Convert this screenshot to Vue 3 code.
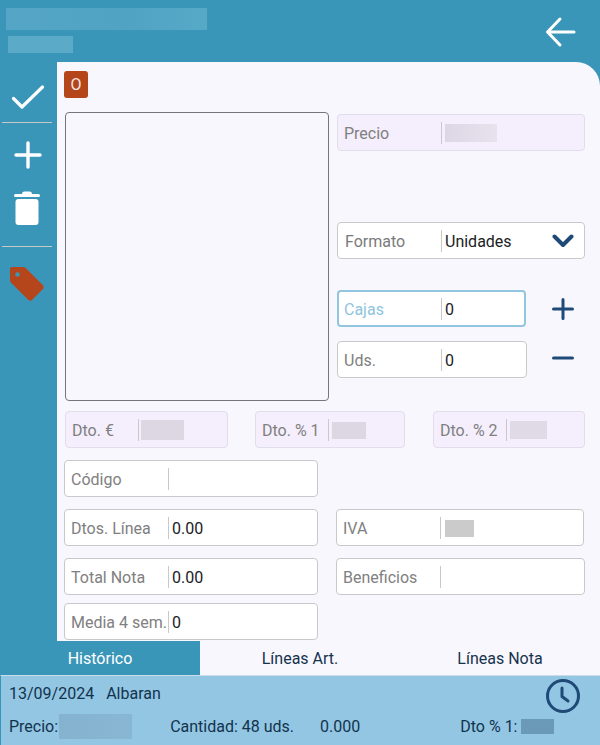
<template>
  <div class="page">
    <header class="topbar">
      <div class="titles">
        <div class="blur blur--title"></div>
        <div class="blur blur--sub"></div>
      </div>
      <svg class="back" width="32" height="32" viewBox="0 0 32 32" fill="none" stroke="#fff" stroke-width="3" stroke-linecap="round" stroke-linejoin="round">
        <path d="M29 16H3M15 3 2.500 16 15 29"/>
      </svg>
    </header>

    <div class="middle">
      <aside class="sidebar">
        <svg class="ico ico--check" width="34" height="26" viewBox="0 0 34 26" fill="none" stroke="#fff" stroke-width="3.200" stroke-linecap="round" stroke-linejoin="round">
          <path d="M2.500 14.500 11 23 31.500 3"/>
        </svg>
        <div class="side-line side-line--1"></div>
        <svg class="ico ico--plus" width="28" height="28" viewBox="0 0 28 28" fill="none" stroke="#fff" stroke-width="3.400" stroke-linecap="round">
          <path d="M14 2v24M2 14h24"/>
        </svg>
        <svg class="ico ico--trash" width="28" height="35" viewBox="0 0 28 35" fill="#fff">
          <rect x="1" y="3" width="26" height="3" rx="1.500"/>
          <path d="M9 3c0-1.500 1-2.500 2.500-2.500h5C18 .5 19 1.500 19 3z"/>
          <rect x="2.500" y="8" width="23" height="26" rx="3"/>
        </svg>
        <div class="side-line side-line--2"></div>
        <svg class="ico ico--tag" width="36" height="36" viewBox="0 0 36 36">
          <path fill="#b5461b" d="M3 1h11c1 0 2 .4 2.700 1.100l17 17c1.200 1.200 1.200 3 0 4.200L23.300 33.800c-1.200 1.200-3 1.200-4.200 0l-17-17C1.400 16 1 15 1 14V3c0-1.100.9-2 2-2z"/>
          <circle cx="8.500" cy="8.500" r="2.300" fill="#3a96b9"/>
        </svg>
      </aside>

      <main class="panel">
        <div class="badge">O</div>

        <div class="top-row">
          <div class="photo"></div>
          <div class="right-col">
            <div class="field field--off field--precio">
              <span class="label">Precio</span>
              <span class="value"><span class="blur blur--precio"></span></span>
            </div>
            <div class="field field--formato">
              <span class="label label--dark">Formato</span>
              <span class="value">Unidades</span>
              <svg class="chevron" width="22" height="14" viewBox="0 0 22 14" fill="none" stroke="#1f4a78" stroke-width="4" stroke-linecap="round" stroke-linejoin="round">
                <path d="M2.500 2.500 11 11l8.500-8.500"/>
              </svg>
            </div>
            <div class="qty-row qty-row--cajas">
              <div class="field field--focus field--qty">
                <span class="label">Cajas</span>
                <span class="value">0</span>
              </div>
              <svg width="24" height="24" viewBox="0 0 24 24" fill="none" stroke="#1f4a78" stroke-width="3" stroke-linecap="round">
                <path d="M12 2.500v19M2.500 12h19"/>
              </svg>
            </div>
            <div class="qty-row qty-row--uds">
              <div class="field field--qty field--uds">
                <span class="label">Uds.</span>
                <span class="value">0</span>
              </div>
              <svg width="24" height="24" viewBox="0 0 24 24" fill="none" stroke="#1f4a78" stroke-width="3" stroke-linecap="round">
                <path d="M2.500 10h19"/>
              </svg>
            </div>
          </div>
        </div>

        <div class="dto-row">
          <div class="field field--off field--dto dto-1">
            <span class="label">Dto. €</span>
            <span class="value"><span class="blur blur--d1"></span></span>
          </div>
          <div class="field field--off field--dto dto-2">
            <span class="label">Dto. % 1</span>
            <span class="value"><span class="blur blur--d2"></span></span>
          </div>
          <div class="field field--off field--dto dto-3">
            <span class="label">Dto. % 2</span>
            <span class="value"><span class="blur blur--d3"></span></span>
          </div>
        </div>

        <div class="form-grid">
          <div class="field"><span class="label">Código</span><span class="value"></span></div>
          <div></div>
          <div class="field"><span class="label">Dtos. Línea</span><span class="value">0.00</span></div>
          <div class="field"><span class="label">IVA</span><span class="value"><span class="blur blur--iva"></span></span></div>
          <div class="field"><span class="label">Total Nota</span><span class="value">0.00</span></div>
          <div class="field field--ben"><span class="label">Beneficios</span><span class="value"></span></div>
          <div class="field field--media"><span class="label">Media 4 sem.</span><span class="value">0</span></div>
        </div>
      </main>
    </div>

    <nav class="tabs">
      <div class="tab tab--active">Histórico</div>
      <div class="tab">Líneas Art.</div>
      <div class="tab">Líneas Nota</div>
    </nav>

    <section class="history">
      <div class="hist-line hist-line--1">
        <span>13/09/2024</span>
        <span class="albaran">Albaran</span>
        <svg class="clock" width="36" height="36" viewBox="0 0 36 36" fill="none" stroke="#1f4a78" stroke-width="3" stroke-linecap="round" stroke-linejoin="round">
          <circle cx="18" cy="18" r="15.500"/>
          <path d="M17 10v8.500l6 4.500"/>
        </svg>
      </div>
      <div class="hist-line hist-line--2">
        <span>Precio:</span>
        <span class="blur blur--hp"></span>
        <span class="cantidad">Cantidad: 48 uds.</span>
        <span class="zero">0.000</span>
        <span class="dto">Dto % 1:</span>
        <span class="blur blur--hd"></span>
      </div>
    </section>
  </div>
</template>

<script setup>
</script>

<style>
html, body { margin: 0; padding: 0; }
</style>

<style scoped>
.page {
  width: 600px;
  height: 745px;
  overflow: hidden;
  display: flex;
  flex-direction: column;
  background: #3a96b9;
  font-family: Roboto, "Liberation Sans", sans-serif;
  font-size: 16px;
  color: #202124;
}

.blur { display: block; }

.topbar {
  height: 62px;
  flex-shrink: 0;
  display: flex;
  justify-content: space-between;
  align-items: flex-start;
  box-sizing: border-box;
  padding: 8px 23px 0 6px;
}
.blur--title { width: 201px; height: 22px; background: linear-gradient(90deg, #55a6c6, #50a3c3 60%, #57a9c8); }
.blur--sub { width: 65px; height: 17px; margin: 6px 0 0 2px; background: #5aaac8; }
.back { margin-top: 8px; }

.middle { flex: 1; display: flex; min-height: 0; }

.sidebar {
  width: 57px;
  flex-shrink: 0;
  display: flex;
  flex-direction: column;
  align-items: flex-start;
  padding-left: 2px;
  box-sizing: border-box;
}
.ico { display: block; }
.ico--check { margin: 22px 0 0 9px; }
.side-line { width: 50px; height: 1px; background: #c6c9c6; }
.side-line--1 { margin-top: 12px; }
.ico--plus { margin: 18px 0 0 12px; }
.ico--trash { margin: 22px 0 0 11px; }
.side-line--2 { margin-top: 20px; }
.ico--tag { margin: 19px 0 0 7px; }

.panel {
  flex: 1;
  background: #f9f7fe;
  border-top-right-radius: 24px;
  box-sizing: border-box;
  padding: 9px 15px 0 7px;
}

.badge {
  width: 24px;
  height: 27px;
  background: #b5461b;
  border-radius: 3px;
  color: #f5e9e2;
  display: flex;
  align-items: center;
  justify-content: center;
  font-size: 16px;
}

.top-row { display: flex; margin: 14px 0 0 1px; }
.photo {
  width: 264px;
  height: 289px;
  box-sizing: border-box;
  border: 1px solid #77747c;
  border-radius: 4px;
}
.right-col { margin-left: 8px; width: 248px; padding-top: 2px; }

.field {
  height: 37px;
  box-sizing: border-box;
  display: flex;
  align-items: center;
  background: #fff;
  border: 1px solid #c9c9cb;
  border-radius: 4px;
  position: relative;
}
.label {
  width: 103px;
  flex-shrink: 0;
  box-sizing: border-box;
  padding: 1px 0 0 6px;
  color: #808080;
  white-space: nowrap;
}
.label--dark { padding-left: 7px; color: #7a7a7a; }
.value {
  flex: 1;
  height: 22px;
  border-left: 1px solid #c9c9cb;
  padding: 1px 0 0 3px;
  box-sizing: border-box;
  display: flex;
  align-items: center;
}

.field--off { background: #f5eefc; border-color: #e0deea; }
.field--formato { margin-top: 71px; }
.chevron { position: absolute; right: 10px; top: 11px; }
.field--focus { border: 2px solid #92c5de; }
.field--focus .label { color: #8fc4de; padding-left: 5px; width: 102px; }

.qty-row { display: flex; align-items: center; }
.qty-row svg { margin-left: 25px; }
.qty-row--cajas { margin-top: 31px; }
.qty-row--uds { margin-top: 14px; }
.field--qty { width: 189px; }
.field--uds { width: 190px; }
.qty-row--uds svg { margin-left: 24px; }

.blur--precio { width: 52px; height: 18px; background: linear-gradient(90deg, #ddd6e4, #e8e2ef); }

.dto-row { display: flex; margin: 10px 0 0 1px; }
.field--dto .label { width: 72px; }
.dto-1 { width: 163px; }
.dto-2 { width: 150px; margin-left: 27px; }
.dto-3 { width: 152px; margin-left: 28px; }
.blur--d1 { width: 43px; height: 20px; background: #dcd7e2; margin-left: -1px; }
.blur--d2 { width: 34px; height: 17px; background: #dcd7e2; }
.blur--d3 { width: 37px; height: 18px; background: #e0dae6; }

.form-grid {
  display: grid;
  grid-template-columns: 254px 248px;
  column-gap: 18px;
  grid-template-rows: 37px 37px 37px 37px;
  row-gap: 12px;
  margin-top: 12px;
}
.field--media { margin-top: -4px; }
.field--ben { width: 249px; }
.blur--iva { width: 29px; height: 17px; margin-left: 1px; background: #cbcbcb; }

.tabs {
  height: 34px;
  flex-shrink: 0;
  display: flex;
  background: #f9f7fe;
}
.tab {
  width: 200px;
  display: flex;
  align-items: center;
  justify-content: center;
  color: #15334d;
}
.tab--active { background: #3a96b9; color: #fff; }

.history {
  height: 70px;
  flex-shrink: 0;
  box-sizing: border-box;
  background: #93c6e3;
  border-left: 1px solid #3a96b9;
  padding: 0 0 0 8px;
  color: #12334d;
  border-top: 1px solid #c9dce8;
}
.hist-line { display: flex; align-items: center; position: relative; }
.hist-line--1 { height: 35px; }
.hist-line--2 { height: 31px; }
.albaran { margin-left: 12px; }
.clock { position: absolute; right: 19px; top: 2px; }
.blur--hp { width: 73px; height: 25px; background: linear-gradient(90deg, #84b2cf, #88b7d4); margin-left: 1px; }
.cantidad { margin-left: 38px; }
.zero { margin-left: 26px; }
.dto { margin-left: 100px; }
.blur--hd { width: 33px; height: 15px; margin-left: 3px; background: #6b9ab9; }
</style>
